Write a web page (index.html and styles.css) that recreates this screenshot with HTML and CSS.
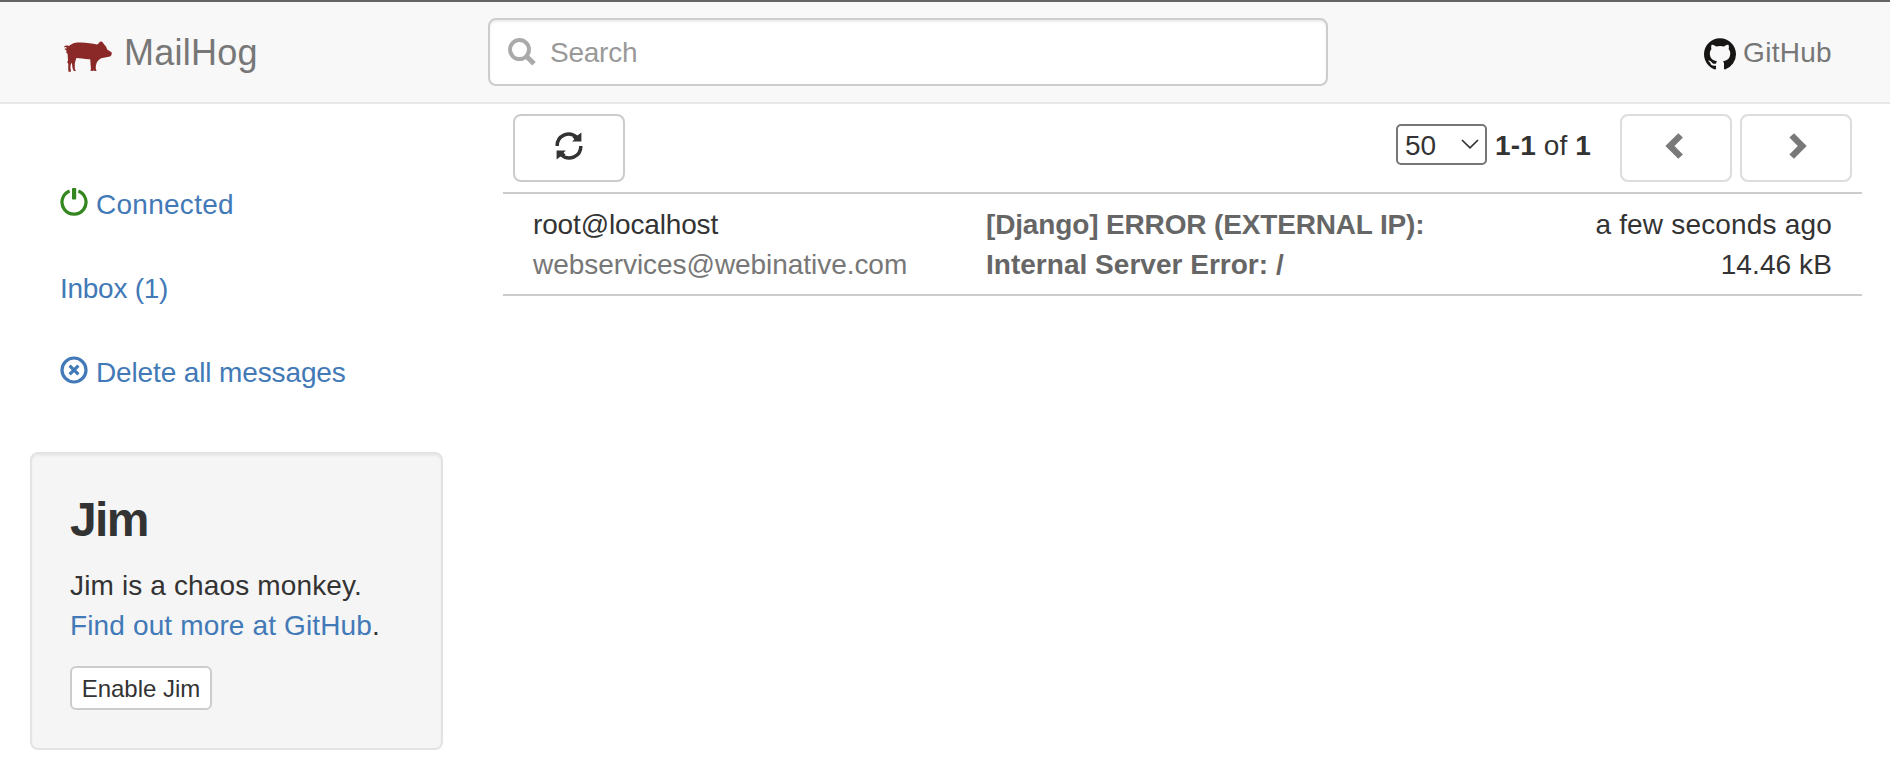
FILE: index.html
```html
<!DOCTYPE html>
<html lang="en">
<head>
<meta charset="utf-8">
<title>MailHog</title>
<link rel="stylesheet" href="styles.css">
</head>
<body>
<header class="navbar">
  <a class="brand" href="#">
    <svg class="pig" viewBox="0 0 48 31" width="48" height="31"><path d="M0.2 6.5C0 5 1.5 4.2 3 4.8L4 4.2 4.8 5.2C7.5 2.8 10 1.7 15 1.5C22 1.2 28 2.6 33 3.4L34 3 35.2 1.6 37 0.2 38.6 1.2 40 3.2 42 5.6 43.2 8.4 47.8 11.6 47.5 14 46 15.4 41 16.4 37 17.2 34.2 19.6 32.8 21.5 31.8 25 31.8 28 32.6 30 30.6 30 29.8 29 29.5 30 26.5 29.8 26.9 27.5 26.2 18.2C21 18.4 16 17 12.4 17L11.4 20 10.8 22.5 10.8 28 12 30 9.8 30 8.6 27.5 7.8 21.5 6.8 23.5 6.4 26.5 7 30.6 4.7 30.9 4.2 28.5 4.3 23 3.2 21 4 19.5 3.6 13 2.3 11.5 2.4 9 0.8 8.7 0.9 7.5 2.6 7.4 2.4 6.2 1.3 5.9Z" fill="#8b2828"/></svg>
    <span>MailHog</span>
  </a>
  <label class="search">
    <svg viewBox="0 0 28 28" width="28" height="28"><circle cx="11.5" cy="11.6" r="9.5" fill="none" stroke="#aaa" stroke-width="4"/><path d="M18.4 18.3L26 25.8" stroke="#aaa" stroke-width="5"/></svg>
    <input class="search-input" type="text" placeholder="Search">
  </label>
  <a class="github" href="#">
    <svg class="octocat" viewBox="0 0 16 15.8" width="32" height="32"><path fill="#161514" fill-rule="evenodd" d="M8 0C3.58 0 0 3.58 0 8c0 3.54 2.29 6.53 5.47 7.59.4.07.55-.17.55-.38 0-.19-.01-.82-.01-1.49-2.01.37-2.53-.49-2.69-.94-.09-.23-.48-.94-.82-1.13-.28-.15-.68-.52-.01-.53.63-.01 1.08.58 1.23.82.72 1.21 1.87.87 2.33.66.07-.52.28-.87.51-1.07-1.78-.2-3.64-.89-3.64-3.95 0-.87.31-1.59.82-2.15-.08-.2-.36-1.02.08-2.12 0 0 .67-.21 2.2.82.64-.18 1.32-.27 2-.27s1.36.09 2 .27c1.53-1.04 2.2-.82 2.2-.82.44 1.1.16 1.92.08 2.12.51.56.82 1.27.82 2.15 0 3.07-1.87 3.75-3.65 3.95.29.25.54.73.54 1.48 0 1.07-.01 1.93-.01 2.2 0 .21.15.46.55.38A8.01 8.01 0 0 0 16 8c0-4.42-3.58-8-8-8z"/></svg>
    <span>GitHub</span>
  </a>
</header>
<div class="layout">
  <aside class="sidebar">
    <nav class="menu">
      <a class="status" href="#"><svg viewBox="0 0 28 28" width="28" height="28"><path d="M9.6 3A12 12 0 1 0 18.4 3" fill="none" stroke="#34861f" stroke-width="3.2"/><rect x="12" y="0" width="4.2" height="11.6" rx=".8" fill="#34861f"/></svg><span>Connected</span></a>
      <a class="inbox" href="#"><span>Inbox (1)</span></a>
      <a class="delete" href="#"><svg viewBox="0 0 28 28" width="28" height="28"><circle cx="14" cy="14" r="12" fill="none" stroke="#4279b7" stroke-width="3.2"/><path d="M9.6 9.6L18.4 18.4M18.4 9.6L9.6 18.4" stroke="#4279b7" stroke-width="3.2"/></svg><span>Delete all messages</span></a>
    </nav>
    <section class="well">
      <h2>Jim</h2>
      <p>Jim is a chaos monkey.<br><a href="#">Find out more at GitHub</a>.</p>
      <button class="btn-small">Enable Jim</button>
    </section>
  </aside>
  <main class="content">
    <div class="toolbar">
      <button class="btn"><svg viewBox="0 0 28 28" width="28" height="28"><path d="M2.2 14A11.6 11.6 0 0 1 21.5 5" fill="none" stroke="#333" stroke-width="3.5"/><path d="M26.4 .4V9.6H17.2L19.4 7.2 17.4 5.2 22.5 3.4Z" fill="#333"/><path d="M25.8 14A11.6 11.6 0 0 1 6.5 23" fill="none" stroke="#333" stroke-width="3.5"/><path d="M1.6 27.6V18.4H10.8L8.6 20.8 10.6 22.8 5.5 24.6Z" fill="#333"/></svg></button>
      <div class="pager">
        <span class="select-wrap">
          <select class="page-size"><option>50</option></select>
          <svg class="caret" viewBox="0 0 18 10" width="18" height="10"><path d="M1 1L9 8.8 17 1" fill="none" stroke="#333" stroke-width="1.7"/></svg>
        </span>
        <span class="range"><b>1-1</b> of <b>1</b></span>
        <button class="btn muted"><svg viewBox="0 0 28 28" width="28" height="28"><path d="M16.3 1.3L20.9 5.6 12.5 14 20.9 22.4 16.3 26.7 3.4 14Z" fill="#333"/></svg></button>
        <button class="btn muted"><svg viewBox="0 0 28 28" width="28" height="28"><path d="M12 1.3L7.4 5.6 15.8 14 7.4 22.4 12 26.7 24.7 14Z" fill="#333"/></svg></button>
      </div>
    </div>
    <div class="message">
      <div class="sender">root@localhost<br><span class="recipient">webservices@webinative.com</span></div>
      <div class="subject">[Django] ERROR (EXTERNAL IP): <span class="detail">Internal Server Error: /</span></div>
      <div class="meta">a few seconds ago<br><span class="size">14.46 kB</span></div>
    </div>
  </main>
</div>
</body>
</html>
```
FILE: styles.css
```css
* { box-sizing: border-box; }
body { margin: 0; background: #fff; color: #333; font: 28px/40px "Liberation Sans", Arial, sans-serif; }
a { color: #4279b7; text-decoration: none; }
svg { display: block; flex: none; }
button, input, select { font: inherit; color: inherit; }

.navbar { display: grid; grid-template-columns: 488px 840px 1fr; height: 104px; background: #f8f8f8; border-top: 2px solid #666465; border-bottom: 2px solid #e7e7e7; align-items: start; }
.brand { display: flex; padding: 31px 0 0 64px; gap: 12px; color: #777; font-size: 36px; letter-spacing: 0.25px; }
.pig { margin-top: 8px; }
.search { display: flex; align-items: center; height: 68px; margin-top: 16px; padding: 0 18px; gap: 14px; background: #fff; border: 2px solid #ccc; border-radius: 8px; box-shadow: inset 0 2px 2px rgba(0, 0, 0, .075); }
.search svg { margin-bottom: 1px; }
.search-input { flex: 1; border: 0; padding: 2px 0 0; outline: 0; background: none; height: 42px; letter-spacing: -0.25px; }
.search-input::placeholder { color: #999; opacity: 1; }
.github { display: flex; justify-content: flex-end; gap: 7px; padding: 31px 58px 0 0; color: #777; letter-spacing: 0.3px; }
.octocat { margin-top: 5px; }

.layout { display: grid; grid-template-columns: 503px 1359px; }
.sidebar { padding-left: 30px; }
.menu { display: flex; flex-direction: column; gap: 44px; padding: 81px 0 0 30px; }
.menu a { display: flex; gap: 8px; height: 40px; }
.menu svg { margin-top: 3px; }
.status { letter-spacing: 0.27px; }
.inbox { letter-spacing: -0.27px; }
.delete { letter-spacing: -0.13px; }
.well { width: 413px; height: 298px; margin-top: 59px; padding: 38px; background: #f5f5f5; border: 2px solid #e3e3e3; border-radius: 8px; box-shadow: inset 0 2px 2px rgba(0, 0, 0, .05); }
.well h2 { margin: 0 0 19px; padding-top: 1px; font-size: 48px; line-height: 54px; letter-spacing: -1.6px; }
.well p { margin: 0 0 20px; letter-spacing: 0.14px; }
.btn-small { display: block; width: 142px; height: 44px; padding: 1px 0 0; background: #fff; border: 2px solid #ccc; border-radius: 6px; font-size: 24px; line-height: 36px; white-space: nowrap; }

.toolbar { display: flex; justify-content: space-between; padding: 10px 10px; height: 88px; }
.btn { display: flex; justify-content: center; width: 112px; height: 68px; padding: 16px 0 0; background: #fff; border: 2px solid #ccc; border-radius: 8px; }
.muted { opacity: .65; }
.pager { display: flex; gap: 8px; }
.select-wrap { position: relative; margin-top: 10px; }
.page-size { display: block; appearance: none; width: 91px; height: 41px; padding: 2px 0 0 7px; border: 2px solid #767676; border-radius: 5px; background: #fff; line-height: 36px; }
.caret { position: absolute; right: 8px; top: 15px; }
.range { width: 117px; padding-top: 12px; white-space: nowrap; letter-spacing: 0.12px; }

.message { display: grid; grid-template-columns: 453px 453px 1fr; padding: 11px 30px 9px; border-top: 2px solid #ccc; border-bottom: 2px solid #ccc; }
.sender { letter-spacing: -0.15px; }
.recipient { color: #777; letter-spacing: -0.05px; }
.subject { padding-right: 10px; color: #666; font-weight: bold; letter-spacing: -0.15px; }
.detail { letter-spacing: 0.02px; }
.meta { text-align: right; letter-spacing: 0.18px; }
.size { letter-spacing: 0.1px; }
```
